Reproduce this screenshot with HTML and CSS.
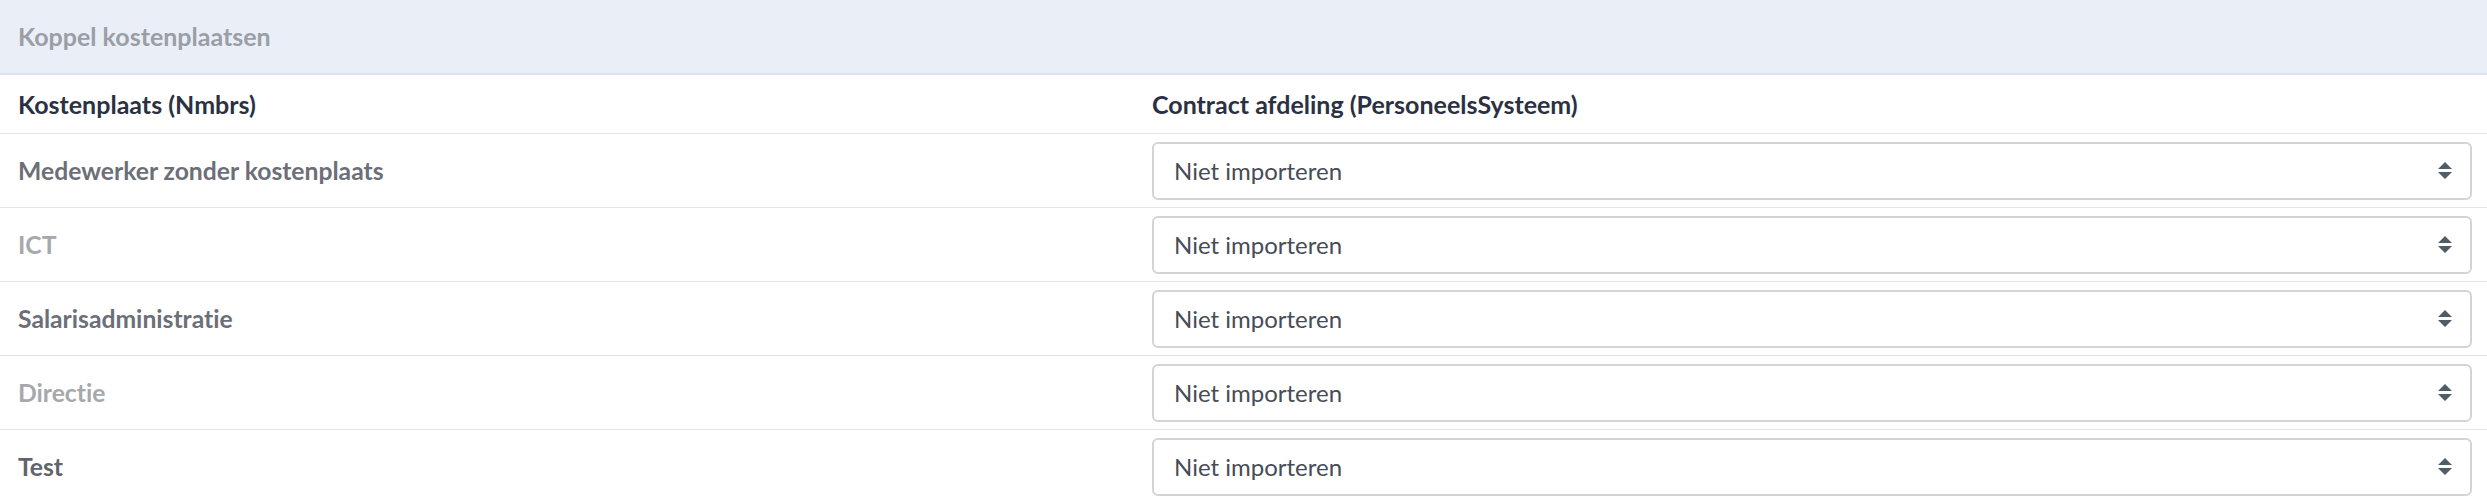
FILE: index.html
```html
<!DOCTYPE html>
<html lang="nl">
<head>
<meta charset="utf-8">
<title>Koppel kostenplaatsen</title>
<link rel="stylesheet" href="styles.css">
</head>
<body>
<div class="panel">
  <div class="panel-head">Koppel kostenplaatsen</div>
  <div class="table">
    <div class="row head">
      <div class="cell c1">Kostenplaats (Nmbrs)</div>
      <div class="cell c2">Contract afdeling (PersoneelsSysteem)</div>
    </div>
    <div class="row">
      <div class="cell c1 name">Medewerker zonder kostenplaats</div>
      <div class="cell c2"><div class="select"><span>Niet importeren</span><svg class="arrows" viewBox="0 0 14 17" width="14" height="17"><path d="M0 7 L7 0 L14 7 Z M0 10 L14 10 L7 17 Z"/></svg></div></div>
    </div>
    <div class="row">
      <div class="cell c1 name muted">ICT</div>
      <div class="cell c2"><div class="select"><span>Niet importeren</span><svg class="arrows" viewBox="0 0 14 17" width="14" height="17"><path d="M0 7 L7 0 L14 7 Z M0 10 L14 10 L7 17 Z"/></svg></div></div>
    </div>
    <div class="row">
      <div class="cell c1 name">Salarisadministratie</div>
      <div class="cell c2"><div class="select"><span>Niet importeren</span><svg class="arrows" viewBox="0 0 14 17" width="14" height="17"><path d="M0 7 L7 0 L14 7 Z M0 10 L14 10 L7 17 Z"/></svg></div></div>
    </div>
    <div class="row">
      <div class="cell c1 name muted">Directie</div>
      <div class="cell c2"><div class="select"><span>Niet importeren</span><svg class="arrows" viewBox="0 0 14 17" width="14" height="17"><path d="M0 7 L7 0 L14 7 Z M0 10 L14 10 L7 17 Z"/></svg></div></div>
    </div>
    <div class="row">
      <div class="cell c1 name dark">Test</div>
      <div class="cell c2"><div class="select"><span>Niet importeren</span><svg class="arrows" viewBox="0 0 14 17" width="14" height="17"><path d="M0 7 L7 0 L14 7 Z M0 10 L14 10 L7 17 Z"/></svg></div></div>
    </div>
  </div>
</div>
</body>
</html>
```
FILE: styles.css
```css
* { box-sizing: border-box; }
html, body { margin: 0; padding: 0; background: #ffffff; }
body {
  font-family: "Lato", "Open Sans", sans-serif;
  font-size: 24px;
  color: #4a4f5a;
  font-variant-ligatures: none;
  font-feature-settings: "liga" 0, "clig" 0;
}
.panel { width: 2487px; }
.panel-head {
  height: 75px;
  background: #eaeff7;
  border-bottom: 2px solid #d9e2ee;
  padding: 0 18px 2px;
  display: flex;
  align-items: center;
  color: #9a9ea6;
  font-weight: 700;
  font-size: 25px;
}
.row {
  display: grid;
  grid-template-columns: 1134px 1fr;
  height: 74px;
  border-bottom: 1.5px solid #dee5f1;
}
.row.head { height: 59px; }
.cell {
  display: flex;
  align-items: center;
  padding-left: 18px;
}
.c2 { padding-left: 18px; padding-right: 15px; }
.head .cell {
  font-weight: 700;
  color: #2b3142;
  font-size: 25px;
}
.name { color: #6c6f78; font-weight: 700; font-size: 24.7px; }
.name.muted { color: #a6a8ac; }
.name.dark { color: #61646d; }
.select {
  width: 100%;
  height: 58px;
  border: 2px solid #d4d4d4;
  border-radius: 6px;
  display: flex;
  align-items: center;
  justify-content: space-between;
  padding: 0 18px 0 20px;
  color: #474c57;
  font-size: 24px;
}
.arrows { fill: #4f5d66; display: block; }
```
